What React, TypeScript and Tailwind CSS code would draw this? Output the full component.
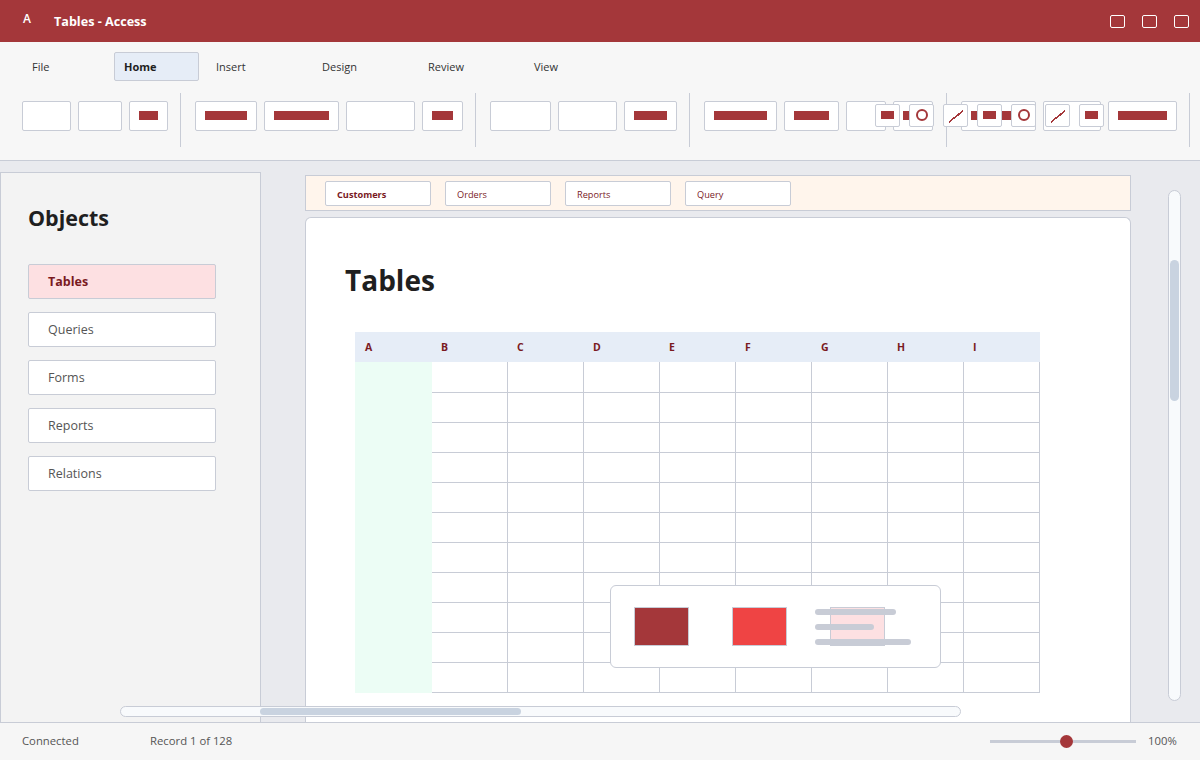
const TABS = [
  { label: "File", w: "w-[85px]" },
  { label: "Home", w: "w-[85px]", active: true },
  { label: "Insert", w: "w-[99px]" },
  { label: "Design", w: "w-[99px]" },
  { label: "Review", w: "w-[99px]" },
  { label: "View", w: "w-[99px]" },
];

// ribbon groups: w = button width, bar = has the red bar
const GROUPS = [
  {
    w: "w-[159px]",
    items: [
      { w: "w-[49px]" },
      { w: "w-[44px]" },
      { w: "w-[39px]", bar: true },
    ],
  },
  {
    w: "w-[295px]",
    items: [
      { w: "w-[62px]", bar: true },
      { w: "w-[75px]", bar: true },
      { w: "w-[69px]" },
      { w: "w-[41px]", bar: true },
    ],
  },
  {
    w: "w-[214px]",
    items: [
      { w: "w-[61px]" },
      { w: "w-[59px]" },
      { w: "w-[53px]", bar: true },
    ],
  },
  {
    w: "w-[257px]",
    items: [
      { w: "w-[73px]", bar: true },
      { w: "w-[55px]", bar: true },
      { w: "w-[40px]" },
      { w: "w-[40px]", bar: true },
    ],
  },
  {
    w: "w-[243px]",
    items: [
      { w: "w-[75px]", bar: true },
      { w: "w-[58px]" },
      { w: "w-[69px]", bar: true },
    ],
  },
];

const TOOLS = ["rect", "circle", "line", "rect", "circle", "line", "rect"];
const NAV = ["Tables", "Queries", "Forms", "Reports", "Relations"];
const DOCS = ["Customers", "Orders", "Reports", "Query"];
const COLS = ["A", "B", "C", "D", "E", "F", "G", "H", "I"];
const ROWS = Array.from({ length: 11 }, (_, i) => i);
const COL_BODY = COLS.slice(1);

function ToolIcon({ kind }: { kind: string }) {
  if (kind === "rect") return <span className="mb-[1px] block h-2 w-[13px] bg-[#a4373a]" />;
  if (kind === "circle") return <span className="mb-[1px] block h-3 w-3 rounded-full border-[2.5px] border-[#a4373a]" />;
  return (
    <svg width="18" height="14" viewBox="0 0 18 14" shapeRendering="crispEdges">
      <line x1="2" y1="13" x2="16" y2="2" stroke="#a4373a" strokeWidth="1.6" />
    </svg>
  );
}

export default function App() {
  return (
    <div className="relative flex h-[760px] w-[1200px] flex-col overflow-hidden bg-[#e9eaee] font-['Open_Sans','Liberation_Sans',sans-serif] text-[#1f1f1f]">
      {/* title bar */}
      <div className="flex h-[42px] shrink-0 items-center bg-[#a4373a] pl-[23px] pr-[11px] text-white">
        <span className="mb-[5px] w-[31px] text-[12px] font-semibold">A</span>
        <span className="pt-[2px] text-[12.6px] font-bold">Tables - Access</span>
        <div className="ml-auto flex gap-[17px]">
          <span className="h-[13px] w-[15px] rounded-[2px] border border-white" />
          <span className="h-[13px] w-[15px] rounded-[2px] border border-white" />
          <span className="h-[13px] w-[15px] rounded-[2px] border border-white" />
        </div>
      </div>

      {/* ribbon */}
      <div className="relative h-[119px] shrink-0 border-b border-[#c8ccd6] bg-[#f7f7f7]">
        <div className="flex gap-[7px] pl-[22px] pt-[10px]">
          {TABS.map((t) => (
            <div
              key={t.label}
              className={`flex h-[29px] items-center rounded-[2px] border px-[9px] pt-[2px] text-[11px] ${t.w} ${
                t.active ? "border-[#c8ccd6] bg-[#e6edf7] font-bold text-[#1f1f1f]" : "border-transparent text-[#333]"
              }`}
            >
              {t.label}
            </div>
          ))}
        </div>
        <div className="mt-[12px] flex pl-[22px]">
          {GROUPS.map((g, i) => (
            <div key={i} className={`flex h-[54px] shrink-0 items-start border-r border-[#c8ccd6] ${g.w} ${i > 0 ? "pl-[14px]" : ""}`}>
              <div className="mt-[8px] flex gap-[7px]">
                {g.items.map((b, j) => (
                  <div key={j} className={`flex h-[30px] items-center rounded-[2px] border border-[#c8ccd6] bg-white px-[9px] ${b.w}`}>
                    {b.bar && <span className="mb-[1px] h-[9px] w-full bg-[#a4373a]" />}
                  </div>
                ))}
              </div>
            </div>
          ))}
        </div>
        {/* floating tool row */}
        <div className="absolute left-[875px] top-[62px] flex gap-[9px]">
          {TOOLS.map((k, i) => (
            <div key={i} className="flex h-[23px] w-[25px] items-center justify-center rounded-[2px] border border-[#c8ccd6] bg-white">
              <ToolIcon kind={k} />
            </div>
          ))}
        </div>
      </div>

      {/* work area */}
      <div className="flex min-h-0 flex-1 pt-[11px]">
        <aside className="h-full w-[261px] shrink-0 border border-b-0 border-[#c8ccd6] bg-[#f3f3f3] px-[27px] pt-[30px]">
          <h2 className="text-[21.5px] font-bold leading-[30px] text-[#1f1f1f]">Objects</h2>
          <div className="mt-[31px] flex w-[188px] flex-col gap-[13px]">
            {NAV.map((n, i) => (
              <div
                key={n}
                className={`flex h-[35px] items-center rounded-[2px] border border-[#c8ccd6] px-[19px] pt-[2px] text-[12.5px] ${
                  i === 0 ? "bg-[#fde0e2] font-bold text-[#7a1a1f]" : "bg-white text-[#555]"
                }`}
              >
                {n}
              </div>
            ))}
          </div>
        </aside>

        <main className="mt-[3px] ml-[44px] flex h-[547px] w-[826px] shrink-0 flex-col">
          <div className="flex h-[36px] shrink-0 gap-[14px] border border-[#c8ccd6] bg-[#fff5ec] pl-[19px] pt-[5px]">
            {DOCS.map((d, i) => (
              <div
                key={d}
                className={`flex h-[25px] w-[106px] items-center rounded-[2px] border border-[#c8ccd6] bg-white px-[11px] pt-[2px] text-[9.2px] text-[#7a1a1f] ${
                  i === 0 ? "font-bold" : ""
                }`}
              >
                {d}
              </div>
            ))}
          </div>
          <div className="mt-[6px] flex-1 rounded-t-[6px] border border-b-0 border-[#c8ccd6] bg-white pl-[39px] pt-[41px]">
            <h1 className="text-[28px] font-bold leading-[42px] text-[#1f1f1f]">Tables</h1>
            <div className="ml-[10px] mt-[31px] w-[685px]">
              <div className="grid h-[30px] grid-cols-[repeat(9,76px)] items-center bg-[#e6edf7] pt-[1px] text-[10.5px] font-bold text-[#7a1a1f]">
                {COLS.map((c) => (
                  <span key={c} className="pl-[10px]">
                    {c}
                  </span>
                ))}
              </div>
              <div className="flex">
                <div className="h-[331px] w-[77px] shrink-0 bg-[#ecfdf5]" />
                <div className="grid grid-cols-[repeat(8,76px)]">
                  {ROWS.flatMap((r) =>
                    COL_BODY.map((c) => (
                      <div key={`${r}${c}`} className={`border-b border-r border-[#c8ccd6] ${r === 0 ? "h-[31px]" : "h-[30px]"}`} />
                    ))
                  )}
                </div>
              </div>
            </div>
          </div>
        </main>
      </div>

      {/* status bar */}
      <div className="flex h-[38px] shrink-0 items-center border-t border-[#c8ccd6] bg-[#f6f6f6] pl-[22px] pr-[24px] text-[11.3px] text-[#555]">
        <span className="w-[128px]">Connected</span>
        <span>Record 1 of 128</span>
        <div className="relative ml-auto h-[3px] w-[146px] bg-[#c8ccd6]">
          <span className="absolute left-[70px] top-[-5px] h-[13px] w-[13px] rounded-full bg-[#a4373a]" />
        </div>
        <span className="ml-[12px] w-[28px] whitespace-nowrap">100%</span>
      </div>

      {/* floating palette */}
      <div className="absolute left-[610px] top-[585px] flex h-[83px] w-[331px] items-center gap-[43px] rounded-[6px] border border-[#c8ccd6] bg-white pl-[23px]">
        <span className="h-[39px] w-[55px] border border-[#c8ccd6] bg-[#a4373a]" />
        <span className="h-[39px] w-[55px] border border-[#c8ccd6] bg-[#ef4444]" />
        <span className="h-[39px] w-[55px] border border-[#c8ccd6] bg-[#fde0e2]" />
        <div className="absolute left-[204px] top-[23px] flex flex-col gap-[9px]">
          <span className="h-[6px] w-[81px] rounded-full bg-[#c8ccd6]" />
          <span className="h-[6px] w-[59px] rounded-full bg-[#c8ccd6]" />
          <span className="h-[6px] w-[96px] rounded-full bg-[#c8ccd6]" />
        </div>
      </div>

      {/* scrollbars */}
      <div className="absolute left-[120px] top-[706px] h-[11px] w-[841px] rounded-full border border-[#c8ccd6] bg-[#f8fafc]">
        <div className="absolute left-[139px] top-[1px] h-[7px] w-[261px] rounded-full bg-[#c9d3e0]" />
      </div>
      <div className="absolute left-[1168px] top-[190px] h-[511px] w-[13px] rounded-full border border-[#c8ccd6] bg-[#f8fafc]">
        <div className="absolute left-[1px] top-[69px] h-[141px] w-[9px] rounded-full bg-[#c9d3e0]" />
      </div>
    </div>
  );
}
